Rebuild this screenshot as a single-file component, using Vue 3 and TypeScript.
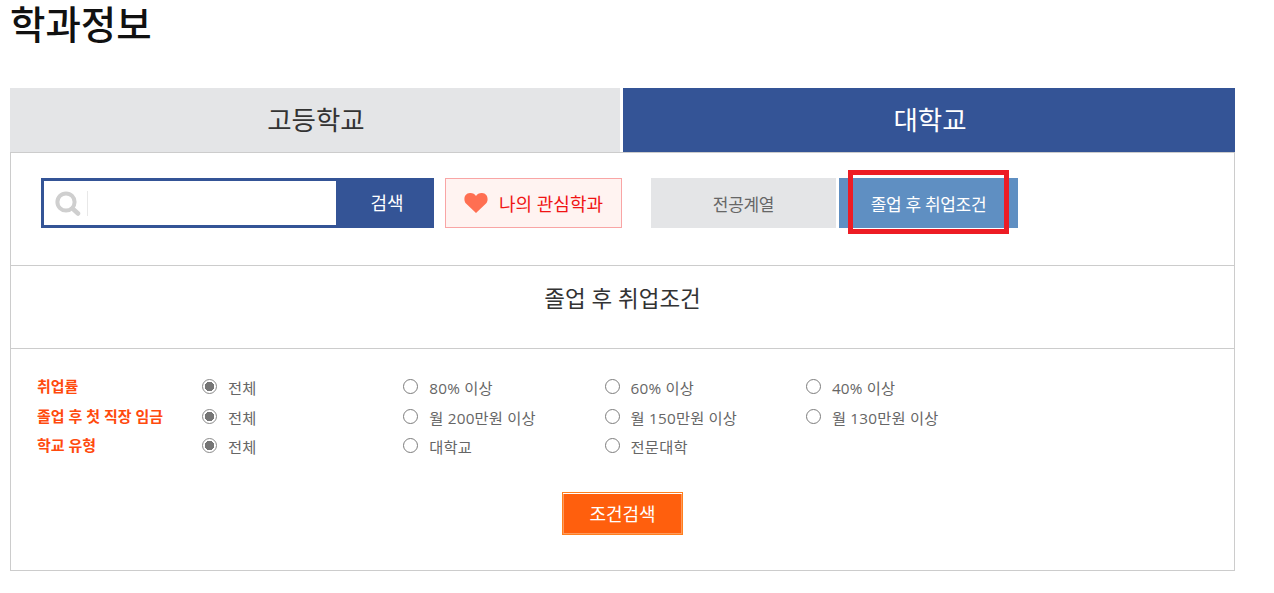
<script setup lang="ts">
interface FilterRow {
  label: string;
  name: string;
  options: string[];
}

const rows: FilterRow[] = [
  { label: "취업률", name: "rate", options: ["전체", "80% 이상", "60% 이상", "40% 이상"] },
  { label: "졸업 후 첫 직장 임금", name: "pay", options: ["전체", "월 200만원 이상", "월 150만원 이상", "월 130만원 이상"] },
  { label: "학교 유형", name: "school", options: ["전체", "대학교", "전문대학"] }
];
</script>

<template>
  <div class="page">
    <h1 class="title">학과정보</h1>

    <div class="tabs">
      <div class="tab">고등학교</div>
      <div class="tab active">대학교</div>
    </div>

    <div class="panel">
      <div class="toolbar">
        <div class="search">
          <div class="search-box">
            <svg class="search-icon" width="26" height="25" viewBox="0 0 26 25">
              <circle cx="11" cy="11" r="8.6" fill="none" stroke="#cfcfcf" stroke-width="4" />
              <path d="M17.5 17.5 L23 22.5" stroke="#cfcfcf" stroke-width="4.5" stroke-linecap="round" />
            </svg>
            <span class="search-sep"></span>
          </div>
          <button class="search-btn">검색</button>
        </div>

        <button class="fav">
          <svg width="24" height="20" viewBox="0 0 24 20">
            <path d="M12 20 L2 10.5 C-1 7.2 0.2 0.3 6 0.1 C8.8 0 10.8 1.2 12 3 C13.2 1.2 15.2 0 18 0.1 C23.8 0.3 25 7.2 22 10.5 Z" fill="#ff6f52" />
          </svg>
          <span>나의 관심학과</span>
        </button>

        <div class="modes">
          <button class="mode">전공계열</button>
          <button class="mode current">졸업 후 취업조건</button>
          <span class="marker"></span>
        </div>
      </div>

      <div class="heading">졸업 후 취업조건</div>

      <div class="filters">
        <div v-for="row in rows" :key="row.name" class="filter-row">
          <div class="filter-label">{{ row.label }}</div>
          <label v-for="(opt, i) in row.options" :key="opt" class="option">
            <input type="radio" :name="row.name" :checked="i === 0" />
            <span>{{ opt }}</span>
          </label>
        </div>
        <div class="actions">
          <button class="submit">조건검색</button>
        </div>
      </div>
    </div>
  </div>
</template>

<style scoped>
.page {
  width: 1225px;
  margin-left: 10px;
  font-family: "Open Sans", "Noto Sans CJK KR", sans-serif;
}

.title {
  margin: 0;
  height: 88px;
  font-family: "Liberation Sans", "Noto Sans CJK KR", sans-serif;
  font-size: 38.5px;
  line-height: 52px;
  font-weight: 500;
  color: #111;
}

.tabs {
  display: flex;
  gap: 3px;
  height: 64px;
}

.tab {
  flex: 610 0 0;
  display: flex;
  align-items: center;
  justify-content: center;
  padding: 0 0 4px 2px;
  box-sizing: border-box;
  background: #e4e5e7;
  color: #333;
  font-size: 26.5px;
}

.tab.active {
  flex: 612 0 0;
  background: #345496;
  color: #fff;
}

.panel {
  height: 419px;
  box-sizing: border-box;
  border: 1px solid #ccc;
}

.toolbar {
  display: flex;
  height: 113px;
  padding: 25px 0 0 30px;
  box-sizing: border-box;
  border-bottom: 1px solid #ccc;
}

button {
  font-family: inherit;
  border: 0;
  padding: 0;
}

.search {
  display: flex;
  width: 393px;
  height: 50px;
}

.search-box {
  display: flex;
  align-items: center;
  width: 295px;
  box-sizing: border-box;
  border: 3px solid #345496;
  border-right: 0;
  background: #fff;
}

.search-icon {
  margin-left: 11px;
  margin-top: 1px;
  filter: blur(0.4px);
}

.search-sep {
  width: 1px;
  height: 25px;
  margin-left: 6px;
  background: #e8e8e8;
}

.search-btn {
  flex: 1;
  background: #345496;
  color: #fff;
  font-size: 18px;
  padding: 0 0 2px 4px;
}

.fav {
  display: flex;
  align-items: center;
  justify-content: center;
  gap: 11px;
  width: 177px;
  height: 50px;
  margin-left: 11px;
  box-sizing: border-box;
  border: 1px solid #f9a5a5;
  background: #fff3f1;
  color: #f01414;
  font-size: 18px;
}

.modes {
  position: relative;
  display: flex;
  gap: 3px;
  margin-left: 29px;
}

.mode {
  width: 185px;
  height: 50px;
  background: #e4e5e7;
  color: #666;
  font-size: 17px;
  letter-spacing: -0.3px;
}

.mode.current {
  width: 179px;
  background: #5f8fc2;
  color: #fff;
}

.marker {
  position: absolute;
  left: 197px;
  top: -8px;
  width: 161px;
  height: 64px;
  box-sizing: border-box;
  border: 5px solid #ed1c24;
}

.heading {
  height: 83px;
  box-sizing: border-box;
  padding-top: 15px;
  border-bottom: 1px solid #ccc;
  text-align: center;
  font-size: 22.5px;
  line-height: 36px;
  color: #333;
}

.filters {
  padding: 24px 0 0 26px;
}

.filter-row {
  display: flex;
  height: 29.5px;
  align-items: center;
}

.filter-label {
  width: 165px;
  font-size: 15px;
  font-weight: 700;
  color: #ff4a0d;
  margin-top: -4px;
}

.option {
  display: flex;
  align-items: center;
  width: 201.3px;
  color: #666;
  font-size: 15.3px;
  letter-spacing: 0.2px;
}

.option span {
  margin: -1px 0 0 11px;
}

.option input {
  appearance: none;
  width: 15px;
  height: 15px;
  margin: -2px 0 0;
  box-sizing: border-box;
  border: 1.3px solid #7d7d7d;
  border-radius: 50%;
  background: #fff;
}

.option input:checked {
  border: 1.5px solid #8a8a8a;
  background: radial-gradient(circle, #767676 0 4.5px, #fff 5px);
}

.actions {
  display: flex;
  justify-content: center;
  margin: 30px 0 0 -26px;
}

.submit {
  width: 121px;
  height: 43px;
  box-sizing: border-box;
  border: 1px solid #ff7f1e;
  box-shadow: inset 0 1px 0 #fff, inset 0 0 0 1px #ff9a5c;
  background: #ff5f0d;
  color: #fff;
  font-size: 18px;
}
</style>
